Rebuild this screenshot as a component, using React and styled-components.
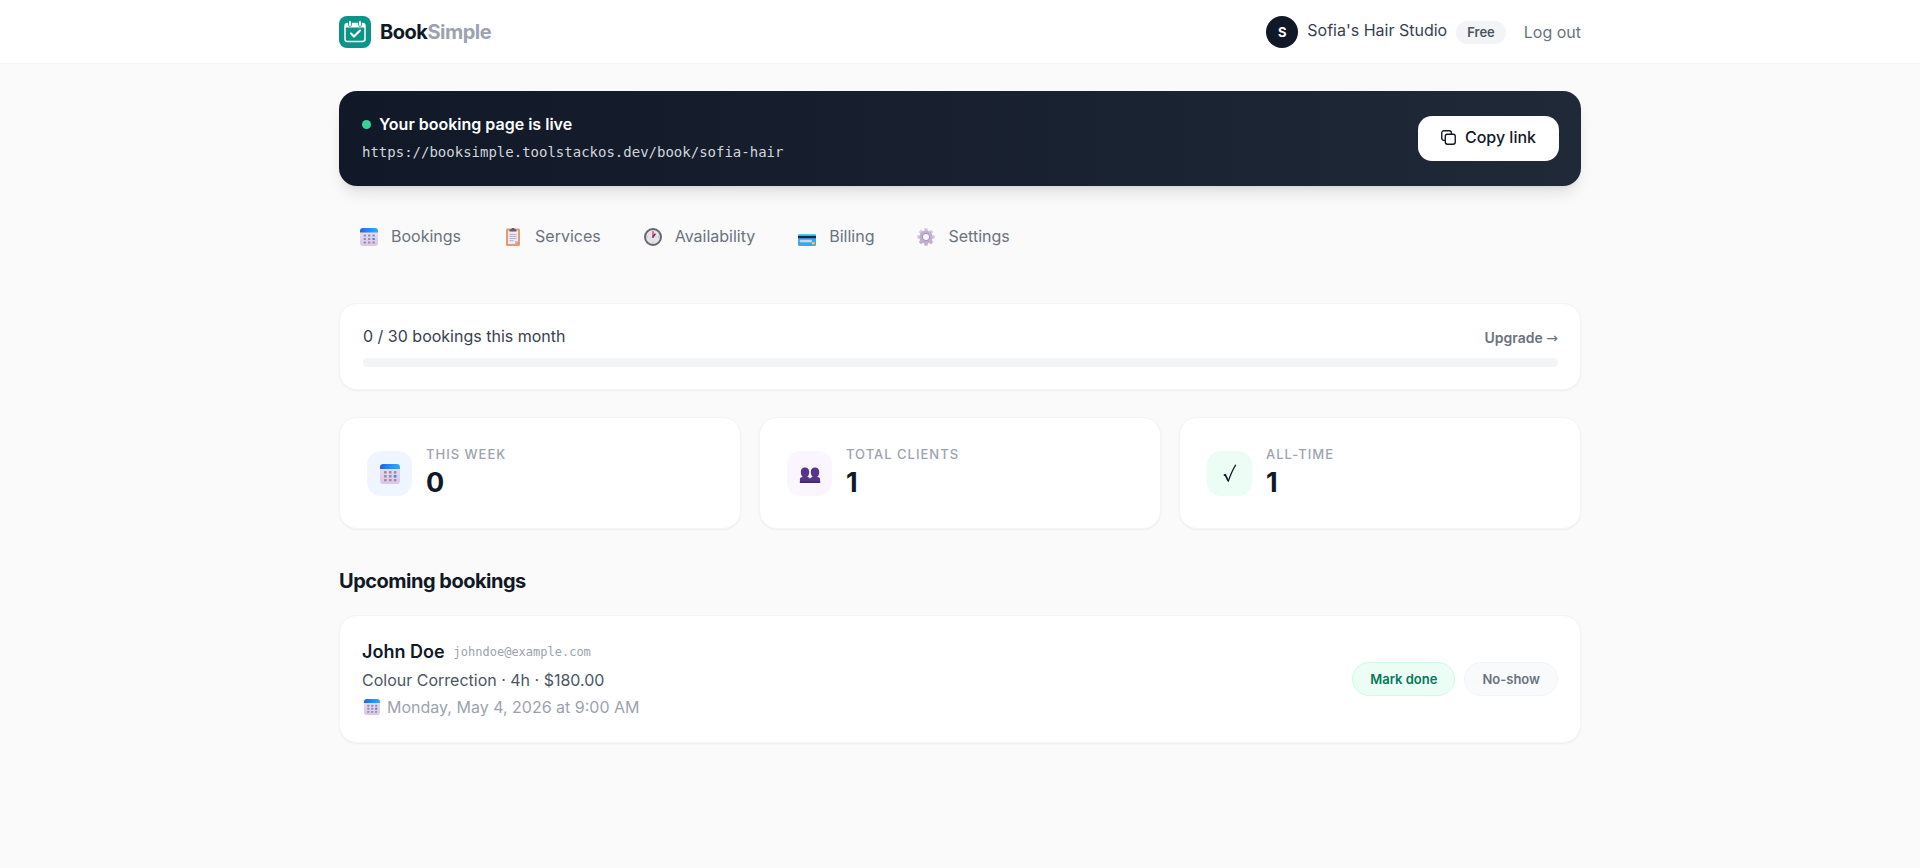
import styled, { createGlobalStyle, ThemeProvider } from 'styled-components';

const theme = {
  fonts: {
    body: "Inter, 'Liberation Sans', sans-serif",
    mono: "'DejaVu Sans Mono', 'Liberation Mono', monospace",
    symbol: "'DejaVu Sans', sans-serif",
  },
  colors: {
    page: '#fafafa',
    white: '#ffffff',
    ink: '#111827',
    strong: '#374151',
    text: '#4b5563',
    muted: '#6b7280',
    faint: '#9ca3af',
    line: '#f3f4f6',
    live: '#34d399',
  },
};

const GlobalStyle = createGlobalStyle`
  *, *::before, *::after {
    box-sizing: border-box;
  }
  body {
    margin: 0;
    background: ${theme.colors.page};
    color: ${theme.colors.ink};
    font-family: ${theme.fonts.body};
    font-size: 16px;
    line-height: 24px;
  }
  h1, h2, h3, p {
    margin: 0;
  }
  a {
    color: inherit;
    text-decoration: none;
  }
  button {
    font-family: inherit;
    cursor: pointer;
  }
  svg {
    display: block;
    flex-shrink: 0;
  }
`;

const Wrapper = styled.div`
  max-width: 1296px;
  margin: 0 auto;
  padding: 0 27px;
`;

const Header = styled.header`
  background: ${(props) => props.theme.colors.white};
  border-bottom: 1px solid ${(props) => props.theme.colors.line};
`;

const HeaderInner = styled(Wrapper)`
  display: flex;
  align-items: center;
  justify-content: space-between;
  padding-top: 16px;
  padding-bottom: 15px;
`;

const Brand = styled.a`
  display: flex;
  align-items: center;
  gap: 9px;
  font-size: 20px;
  font-weight: 700;
  letter-spacing: -0.025em;
`;

const BrandLight = styled.span`
  color: ${(props) => props.theme.colors.faint};
`;

const Account = styled.div`
  display: flex;
  align-items: center;
  gap: 18px;
`;

const Profile = styled.div`
  display: flex;
  align-items: center;
  gap: 9px;
`;

const Avatar = styled.span`
  display: flex;
  align-items: center;
  justify-content: center;
  width: 32px;
  height: 32px;
  border-radius: 50%;
  background: ${(props) => props.theme.colors.ink};
  color: ${(props) => props.theme.colors.white};
  font-size: 13px;
  font-weight: 700;
`;

const StudioName = styled.span`
  padding-bottom: 4px;
  color: ${(props) => props.theme.colors.strong};
`;

const Plan = styled.span`
  padding: 2px 11px;
  border-radius: 12px;
  background: ${(props) => props.theme.colors.line};
  color: ${(props) => props.theme.colors.text};
  font-size: 13px;
  font-weight: 600;
  line-height: 19px;
`;

const LogOut = styled.button`
  padding: 0;
  border: 0;
  background: none;
  color: ${(props) => props.theme.colors.muted};
  font-size: 16px;
  line-height: 24px;
`;

const Main = styled(Wrapper).attrs({ as: 'main' })`
  padding-top: 27px;
  padding-bottom: 45px;
`;

const Banner = styled.section`
  display: flex;
  align-items: center;
  justify-content: space-between;
  padding: 22px 22px 22px 23px;
  border-radius: 18px;
  background: linear-gradient(to right, #111827, #1f2937);
  box-shadow: 0 10px 15px -3px rgba(0, 0, 0, 0.1),
    0 4px 6px -4px rgba(0, 0, 0, 0.1);
  color: ${(props) => props.theme.colors.white};
`;

const BannerTitle = styled.h2`
  display: flex;
  align-items: center;
  gap: 8px;
  font-size: 16px;
  font-weight: 600;
  line-height: 23px;
`;

const LiveDot = styled.span`
  width: 9px;
  height: 9px;
  border-radius: 50%;
  background: ${(props) => props.theme.colors.live};
`;

const BookingUrl = styled.p`
  margin-top: 5px;
  color: #d1d5db;
  font-family: ${(props) => props.theme.fonts.mono};
  font-size: 14px;
  line-height: 23px;
`;

const CopyButton = styled.button`
  display: flex;
  align-items: center;
  gap: 9px;
  padding: 10px 23px 12px;
  border: 0;
  border-radius: 14px;
  background: ${(props) => props.theme.colors.white};
  color: ${(props) => props.theme.colors.ink};
  font-size: 16px;
  font-weight: 500;
  line-height: 23px;
`;

const Tabs = styled.nav`
  display: flex;
  gap: 4px;
  margin: 27px 0 44px;
`;

const Tab = styled.a`
  display: flex;
  align-items: center;
  gap: 10px;
  padding: 11px 18px;
  color: ${(props) => props.theme.colors.muted};
  line-height: 24px;
`;

const TabIcon = styled.span`
  display: flex;
  justify-content: center;
  width: 24px;
  padding-top: 2px;
`;

const Card = styled.section`
  border: 1px solid ${(props) => props.theme.colors.line};
  border-radius: 18px;
  background: ${(props) => props.theme.colors.white};
  box-shadow: 0 1px 2px rgba(0, 0, 0, 0.05);
`;

const Usage = styled(Card)`
  padding: 22px 22px 22px 23px;
`;

const UsageTop = styled.div`
  display: flex;
  align-items: flex-end;
  justify-content: space-between;
  margin-bottom: 9px;
  color: ${(props) => props.theme.colors.strong};
`;

const UsageText = styled.span`
  padding-bottom: 2px;
  line-height: 21px;
`;

const UpgradeLink = styled.a`
  color: ${(props) => props.theme.colors.muted};
  font-size: 14px;
  font-weight: 600;
  line-height: 22px;
`;

const Arrow = styled.span`
  font-family: ${(props) => props.theme.fonts.symbol};
  font-weight: 400;
`;

const Track = styled.div`
  height: 9px;
  overflow: hidden;
  border-radius: 5px;
  background: ${(props) => props.theme.colors.line};
`;

const Fill = styled.div`
  height: 100%;
  border-radius: 5px;
  background: ${(props) => props.theme.colors.ink};
`;

const Stats = styled.div`
  display: grid;
  grid-template-columns: repeat(3, 1fr);
  gap: 18px;
  margin: 27px 0 36px;
`;

const Stat = styled(Card)`
  display: flex;
  align-items: center;
  gap: 14px;
  padding: 24px 27px 28px;
`;

const StatIcon = styled.span`
  display: flex;
  align-items: center;
  justify-content: center;
  width: 45px;
  height: 45px;
  margin-top: 5px;
  border-radius: 14px;
  background: ${(props) => props.$tint};
`;

const StatLabel = styled.h3`
  color: ${(props) => props.theme.colors.faint};
  font-size: 13px;
  font-weight: 500;
  letter-spacing: 1px;
  line-height: 24px;
  text-transform: uppercase;
`;

const StatValue = styled.p`
  font-size: 27px;
  font-weight: 700;
  line-height: 34px;
`;

const SectionTitle = styled.h2`
  margin-bottom: 18px;
  font-size: 20px;
  font-weight: 700;
  letter-spacing: -0.025em;
  line-height: 32px;
`;

const Booking = styled(Card).attrs({ as: 'article' })`
  display: flex;
  align-items: center;
  justify-content: space-between;
  padding: 22px;
`;

const Client = styled.div`
  display: flex;
  align-items: center;
  gap: 9px;
`;

const ClientName = styled.h3`
  font-size: 18px;
  font-weight: 600;
  line-height: 28px;
`;

const ClientEmail = styled.span`
  color: ${(props) => props.theme.colors.faint};
  font-family: ${(props) => props.theme.fonts.mono};
  font-size: 12px;
`;

const Detail = styled.p`
  color: ${(props) => props.theme.colors.text};
  line-height: 28px;
`;

const When = styled.p`
  display: flex;
  align-items: center;
  gap: 7px;
  padding-left: 2px;
  color: ${(props) => props.theme.colors.faint};
  line-height: 26px;
`;

const Actions = styled.div`
  display: flex;
  gap: 9px;
`;

const Pill = styled.button`
  padding: 6px 17px;
  border: 1px solid ${(props) => (props.$positive ? '#d1fae5' : '#f3f4f6')};
  border-radius: 17px;
  background: ${(props) => (props.$positive ? '#ecfdf5' : '#f9fafb')};
  color: ${(props) => (props.$positive ? '#047857' : '#6b7280')};
  font-size: 13px;
  font-weight: 600;
  line-height: 20px;
`;

const Logo = () => (
  <svg width="32" height="32" viewBox="0 0 32 32" fill="none" aria-hidden="true">
    <rect width="32" height="32" rx="8" fill="#0d9488" />
    <rect x="6" y="7.5" width="20" height="18" rx="2.5" stroke="#fff" strokeWidth="1.5" />
    <path d="M6 10a2.5 2.5 0 0 1 2.5-2.5h15A2.5 2.5 0 0 1 26 10v1.5H6z" fill="#fff" />
    <path d="M11 6v3M21 6v3" stroke="#0d9488" strokeWidth="3.6" strokeLinecap="round" />
    <path d="M11 6v3M21 6v3" stroke="#fff" strokeWidth="2" strokeLinecap="round" />
    <path d="M12 17.5l3 3 6-6" stroke="#fff" strokeWidth="2.2" strokeLinecap="round" strokeLinejoin="round" />
  </svg>
);

const CopyIcon = () => (
  <svg width="15" height="15" viewBox="0 0 14 14" fill="none" stroke="#111827" strokeWidth="1.3" aria-hidden="true">
    <rect x="4" y="4" width="9.3" height="9.3" rx="2" />
    <path d="M4 9.7H2.7a2 2 0 0 1-2-2v-5a2 2 0 0 1 2-2h5a2 2 0 0 1 2 2V4" />
  </svg>
);

const CalendarIcon = ({ size = 18 }) => (
  <svg width={size} height={size} viewBox="0 0 18 18" aria-hidden="true">
    <defs>
      <linearGradient id="calTop" x1="0" x2="1">
        <stop offset="0" stopColor="#2563d9" />
        <stop offset="0.5" stopColor="#1e90ff" />
        <stop offset="1" stopColor="#3ba7f5" />
      </linearGradient>
      <linearGradient id="calBody" x1="0" y1="0" x2="0" y2="1">
        <stop offset="0" stopColor="#e6dcf0" />
        <stop offset="1" stopColor="#dcc5e8" />
      </linearGradient>
    </defs>
    <path d="M0 4h18v11a3 3 0 0 1-3 3H3a3 3 0 0 1-3-3z" fill="url(#calBody)" />
    <path d="M0 4.5V3a3 3 0 0 1 3-3h12a3 3 0 0 1 3 3v1.5z" fill="url(#calTop)" />
    {[6.4, 9.9, 13.4].map((y) =>
      [3.6, 8, 12.4].map((x) => (
        <rect
          key={`${x}-${y}`}
          x={x}
          y={y}
          width="2.4"
          height="2.2"
          rx="0.5"
          fill={x === 12.4 && y === 9.9 ? '#2b8cf0' : '#988da6'}
        />
      ))
    )}
  </svg>
);

const ClipboardIcon = () => (
  <svg width="18" height="18" viewBox="0 0 18 18" aria-hidden="true">
    <rect x="2" y="0.5" width="14" height="17.5" rx="1.5" fill="#dc9d78" />
    <path d="M4 2.5h10v10.5l-3 3H4z" fill="#f0e9f5" />
    <path d="M14 13l-3 3v-3z" fill="#c9b8d8" />
    <path d="M5.5 3.5V2.3a1 1 0 0 1 1-1h1a1.5 1.5 0 0 1 3 0h1a1 1 0 0 1 1 1v1.2z" fill="#62586e" />
    <path d="M5.5 6.5h7M5.5 8.5h7M5.5 10.5h7M5.5 12.7h4" stroke="#a99fb5" strokeWidth="0.8" />
  </svg>
);

const ClockIcon = () => (
  <svg width="18" height="18" viewBox="0 0 18 18" fill="none" aria-hidden="true">
    <circle cx="9" cy="9" r="8" fill="#e4e1e8" stroke="#67646b" strokeWidth="2" />
    <path d="M9 3v1M15 9h-1M9 15v-1M3 9h1" stroke="#aaa5b0" strokeWidth="0.8" />
    <path d="M9 8.5V4" stroke="#ef5f80" strokeWidth="1.8" strokeLinecap="round" />
    <path d="M9.3 8.5l1.7-2.3" stroke="#433b5b" strokeWidth="1.5" strokeLinecap="round" />
    <circle cx="9" cy="9" r="1" fill="#6b5375" />
  </svg>
);

const CardIcon = () => (
  <svg width="18" height="18" viewBox="0 0 18 18" aria-hidden="true">
    <rect y="6" width="18" height="12" rx="1.5" fill="#35a9ea" />
    <path d="M0 8v-.5A1.5 1.5 0 0 1 1.5 6h15A1.5 1.5 0 0 1 18 7.5V8z" fill="#4fd0ef" />
    <rect y="7.8" width="18" height="2.4" fill="#1c2b45" />
    <rect x="1.8" y="11.8" width="12" height="2.5" fill="#cfd5ee" />
    <rect x="14" y="14" width="2.6" height="2.4" rx="0.5" fill="#f1cf58" />
  </svg>
);

const GearIcon = () => (
  <svg width="18" height="18" viewBox="0 0 18 18" fill="none" aria-hidden="true">
    {[0, 45, 90, 135, 180, 225, 270, 315].map((angle) => (
      <rect
        key={angle}
        x="7.2"
        y="0.3"
        width="3.6"
        height="4"
        rx="1"
        fill={angle > 90 && angle < 270 ? '#c3b0d2' : '#d4c8e0'}
        transform={`rotate(${angle} 9 9)`}
      />
    ))}
    <circle cx="9" cy="9" r="5" stroke="#c0afd0" strokeWidth="3.2" />
    <circle cx="9" cy="9" r="3.6" stroke="#a493b6" strokeWidth="1" />
  </svg>
);

const PeopleIcon = () => (
  <svg width="22" height="22" viewBox="0 -2 22 22" fill="#56348a" aria-hidden="true">
    <path d="M6 2.5c2.8 0 4.2 1.7 4.2 4.5 0 2.2-.7 3.8-1.9 4.7v.3c1.700.2 2.700.8 2.700 2.300V18H.9v-3.700c0-1.500.9-2.100 2.800-2.300v-.3C2.500 10.800 1.800 9.200 1.800 7c0-2.800 1.400-4.500 4.200-4.500z" />
    <path d="M16 2.500c-2.800 0-4.200 1.700-4.200 4.500 0 2.200.700 3.800 1.900 4.700v.300c-1.700.200-2.700.800-2.700 2.300V18h10.100v-3.700c0-1.500-.900-2.100-2.800-2.300v-.300c1.200-.900 1.900-2.500 1.900-4.700 0-2.800-1.400-4.500-4.200-4.500z" />
    <path d="M.9 16.500h20.200V18H.9z" fill="#43246f" />
  </svg>
);

const CheckIcon = () => (
  <svg width="20" height="20" viewBox="0 0 20 20" fill="none" stroke="#111827" aria-hidden="true">
    <path d="M3.8 11.5l1.4-.8 3 6.2" strokeWidth="1.7" strokeLinejoin="round" />
    <path d="M8.3 17.3C10.5 11 12.5 6 15.6 1.2" strokeWidth="1.2" strokeLinecap="round" />
  </svg>
);

const tabs = [
  { label: 'Bookings', Icon: CalendarIcon },
  { label: 'Services', Icon: ClipboardIcon },
  { label: 'Availability', Icon: ClockIcon },
  { label: 'Billing', Icon: CardIcon },
  { label: 'Settings', Icon: GearIcon },
];

const stats = [
  { label: 'This week', value: 0, tint: '#eff6ff', icon: <CalendarIcon size={20} /> },
  { label: 'Total clients', value: 1, tint: '#faf5ff', icon: <PeopleIcon /> },
  { label: 'All-time', value: 1, tint: '#ecfdf5', icon: <CheckIcon /> },
];

const usage = { used: 0, limit: 30 };

const App = () => {
  return (
    <ThemeProvider theme={theme}>
      <GlobalStyle />
      <Header>
        <HeaderInner>
          <Brand href="#">
            <Logo />
            <span>
              Book<BrandLight>Simple</BrandLight>
            </span>
          </Brand>
          <Account>
            <Profile>
              <Avatar>S</Avatar>
              <StudioName>Sofia&apos;s Hair Studio</StudioName>
              <Plan>Free</Plan>
            </Profile>
            <LogOut type="button">Log out</LogOut>
          </Account>
        </HeaderInner>
      </Header>
      <Main>
        <Banner>
          <div>
            <BannerTitle>
              <LiveDot />
              Your booking page is live
            </BannerTitle>
            <BookingUrl>https://booksimple.toolstackos.dev/book/sofia-hair</BookingUrl>
          </div>
          <CopyButton type="button">
            <CopyIcon />
            Copy link
          </CopyButton>
        </Banner>
        <Tabs>
          {tabs.map(({ label, Icon }) => (
            <Tab key={label} href={`#${label.toLowerCase()}`}>
              <TabIcon>
                <Icon />
              </TabIcon>
              {label}
            </Tab>
          ))}
        </Tabs>
        <Usage>
          <UsageTop>
            <UsageText>
              {usage.used} / {usage.limit} bookings this month
            </UsageText>
            <UpgradeLink href="#billing">
              Upgrade <Arrow>→</Arrow>
            </UpgradeLink>
          </UsageTop>
          <Track>
            <Fill style={{ width: `${(usage.used / usage.limit) * 100}%` }} />
          </Track>
        </Usage>
        <Stats>
          {stats.map((stat) => (
            <Stat key={stat.label}>
              <StatIcon $tint={stat.tint}>{stat.icon}</StatIcon>
              <div>
                <StatLabel>{stat.label}</StatLabel>
                <StatValue>{stat.value}</StatValue>
              </div>
            </Stat>
          ))}
        </Stats>
        <SectionTitle>Upcoming bookings</SectionTitle>
        <Booking>
          <div>
            <Client>
              <ClientName>John Doe</ClientName>
              <ClientEmail>johndoe@example.com</ClientEmail>
            </Client>
            <Detail>Colour Correction · 4h · $180.00</Detail>
            <When>
              <CalendarIcon size={16} />
              Monday, May 4, 2026 at 9:00 AM
            </When>
          </div>
          <Actions>
            <Pill type="button" $positive>
              Mark done
            </Pill>
            <Pill type="button">No-show</Pill>
          </Actions>
        </Booking>
      </Main>
    </ThemeProvider>
  );
};

export default App;
